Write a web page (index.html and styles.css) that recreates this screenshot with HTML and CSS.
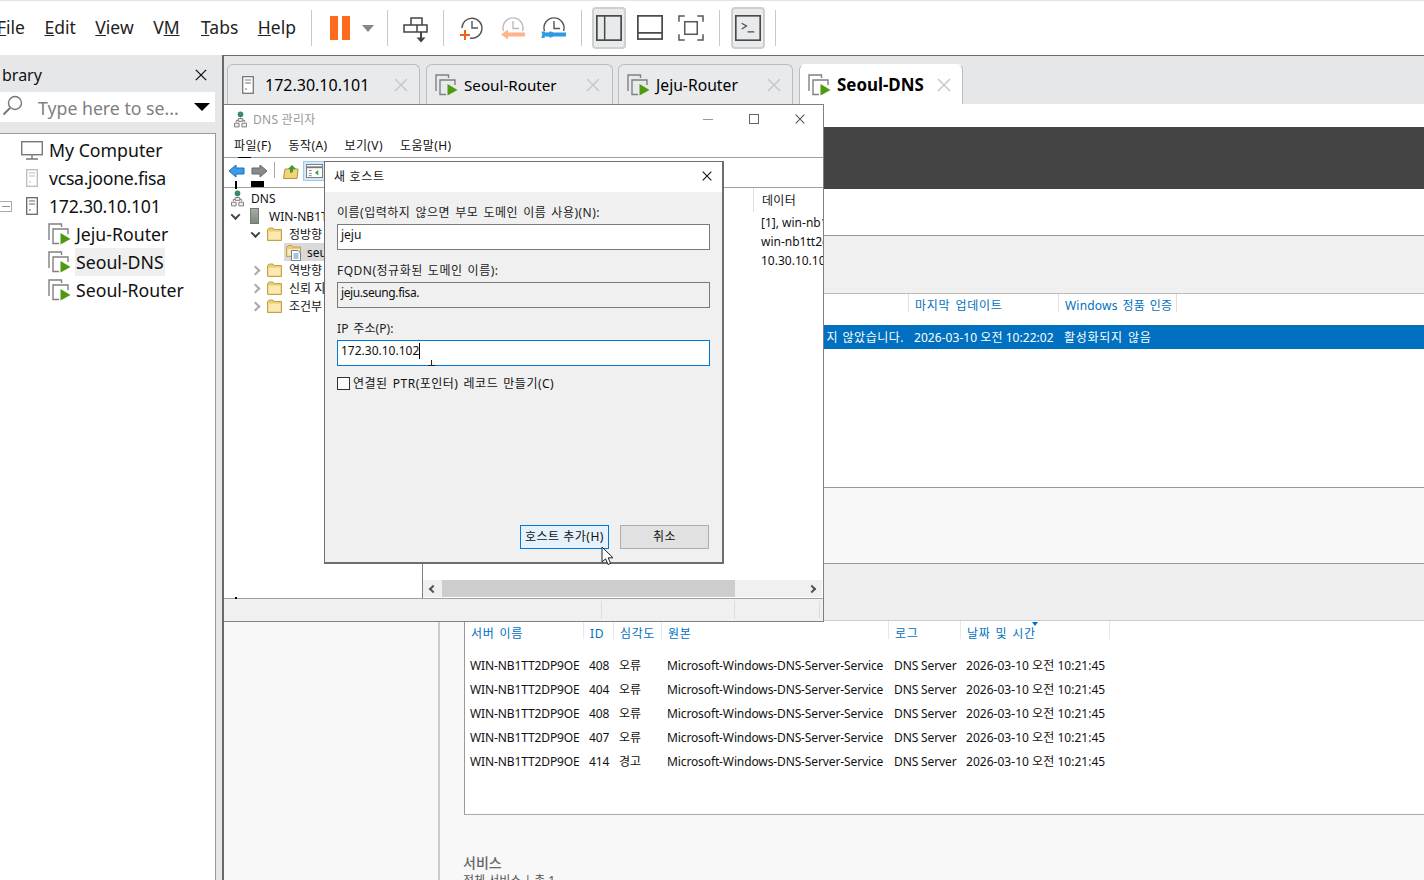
FILE: index.html
```html
<!DOCTYPE html>
<html lang="ko">
<head>
    <meta charset="UTF-8">
    <title>Seoul-DNS - VMware Workstation</title>
    <link rel="stylesheet" href="styles.css">
</head>
<body>
    <svg class="sprite" width="0" height="0">
        <symbol id="i-vm" viewBox="0 0 23 22">
            <path d="M1 17V1H13.5V4" fill="none" stroke="#808080" stroke-width="1.4"/>
            <path d="M11 20.5H5V6H20V11" fill="none" stroke="#808080" stroke-width="1.4"/>
            <path d="M12.5 10L22.5 16L12.5 21.5Z" fill="#4f9a0e"/>
        </symbol>
        <symbol id="i-server" viewBox="0 0 12 18">
            <rect x=".7" y=".7" width="10.6" height="16.6" fill="#fff" stroke="currentColor" stroke-width="1.3"/>
            <path d="M3 4H9M3 7H9M3 13H5" stroke="currentColor" stroke-width="1.2"/>
        </symbol>
        <symbol id="i-close" viewBox="0 0 14 14">
            <path d="M1 1L13 13M13 1L1 13" fill="none" stroke="currentColor" stroke-width="1.5"/>
        </symbol>
        <symbol id="i-folder" viewBox="0 0 15 14">
            <path d="M.5 13.5V2.5L2 1H6L7 2.5H14.5V13.5Z" fill="#eccb74" stroke="#c4a24e"/>
            <path d="M1.5 12.5V4.5H13.5V12.5Z" fill="#fbe9b0"/>
        </symbol>
        <symbol id="i-zone" viewBox="0 0 17 17">
            <path d="M.5 12.5V3L2 1.5H6L7 3H14.5V12.5Z" fill="#eccb74" stroke="#c4a24e"/>
            <path d="M1.5 11.5V5H13.5V11.5Z" fill="#fbe9b0"/>
            <path d="M5.5 6.5H12L14.5 9V16.5H5.5Z" fill="#fff" stroke="#6f7f95"/>
            <path d="M7.5 10H12.5M7.5 12H12.5M7.5 14H12.5" stroke="#4a86c5"/>
        </symbol>
        <symbol id="i-net" viewBox="0 0 14 18">
            <circle cx="7" cy="3.5" r="3" fill="#2f8f3e"/>
            <circle cx="7" cy="3" r="1.6" fill="#3a7fd0"/>
            <path d="M7 7V10M2.5 12V10H11.5V12" fill="none" stroke="#777"/>
            <path d="M4.5 8H9.5V11H4.5ZM.5 13H5.5V17H.5ZM8.5 13H13.5V17H8.5Z" fill="#eee" stroke="#777"/>
        </symbol>
    </svg>

    <header class="toolbar">
        <nav class="menu">
            <a class="menu-first"><u>F</u>ile</a>
            <a><u>E</u>dit</a>
            <a><u>V</u>iew</a>
            <a class="menu-vm">V<u>M</u></a>
            <a><u>T</u>abs</a>
            <a><u>H</u>elp</a>
        </nav>
        <span class="sep sep-a"></span>
        <span class="pause"><i></i><i></i></span>
        <span class="caret"></span>
        <span class="sep sep-b"></span>
        <svg class="tool tool-send" viewBox="0 0 25 26" fill="none" stroke="#444" stroke-width="1.5">
            <path d="M8 8V1H19V8M1 8H24V15H1ZM14 8V15"/>
            <path d="M18 15V22" stroke-width="2"/>
            <path d="M13.5 20.5H22.5L18 25.5Z" fill="#444" stroke="none"/>
        </svg>
        <span class="sep sep-c"></span>
        <svg class="tool tool-clock" viewBox="0 0 25 26" fill="none" stroke="#555" stroke-width="1.4">
            <path d="M3 12A10 10 0 1 1 11 22M13 5V12H19"/>
            <path d="M6 14V24M1 19H11" stroke="#f0601c" stroke-width="2"/>
        </svg>
        <svg class="tool tool-clock2" viewBox="0 0 25 26" fill="none" stroke="#bbb" stroke-width="1.4">
            <path d="M3.5 15A10 10 0 1 1 22.5 15M13 5V12.5H19"/>
            <path d="M25 18.5H6" stroke="#ffb38a" stroke-width="4"/>
            <path d="M1 18.5L8 13.5V23.5Z" fill="#ffb38a" stroke="none"/>
        </svg>
        <svg class="tool tool-clock3" viewBox="0 0 25 26" fill="none" stroke="#555" stroke-width="1.4">
            <path d="M3.5 15A10 10 0 1 1 22.5 15M13 5V12.5H19"/>
            <path d="M8 18.5H25" stroke="#2d9be0" stroke-width="4"/>
            <path d="M2 15.5A4 4 0 0 0 9.5 17A1 1 0 0 1 9.5 20A4 4 0 0 0 2 22" stroke="#2d9be0" stroke-width="3"/>
        </svg>
        <span class="sep sep-d"></span>
        <span class="toggle on">
            <svg viewBox="0 0 24 24" fill="none" stroke="#4a4a4a" stroke-width="1.6"><rect x=".8" y=".8" width="22.4" height="22.4"/><path d="M8 1V23" stroke-width="1.4"/></svg>
        </span>
        <span class="toggle">
            <svg viewBox="0 0 24 24" fill="none" stroke="#4a4a4a" stroke-width="1.6"><rect x=".8" y=".8" width="22.4" height="21.4"/><path d="M1 16.5H23"/></svg>
        </span>
        <span class="toggle">
            <svg viewBox="0 0 27 27" fill="none" stroke="#5a5a5a" stroke-width="1.6"><path d="M1 7V1H7M20 1H26V7M26 20V26H20M7 26H1V20"/><rect x="7" y="7" width="13" height="13"/></svg>
        </span>
        <span class="sep sep-e"></span>
        <span class="toggle on toggle-term">
            <svg viewBox="0 0 27 27" fill="none" stroke="#4a4a4a" stroke-width="1.6"><rect x=".8" y=".8" width="25.4" height="25.4" stroke-width="1.8"/><path d="M7 8.5L12 11.5L7 14.5M13 17.5H20" stroke-width="1.2"/></svg>
        </span>
        <span class="sep sep-f"></span>
    </header>

    <div class="main">
        <aside class="library">
            <div class="library-head">
                <span class="library-title">brary</span>
                <svg class="library-close"><use href="#i-close"/></svg>
            </div>
            <div class="library-search">
                <svg class="search-icon" viewBox="0 0 22 22" fill="none" stroke="#777" stroke-width="1.4"><circle cx="13" cy="8" r="6.5"/><path d="M8 13L1.5 19.5" stroke-width="2"/></svg>
                <span class="search-text">Type here to se...</span>
                <span class="search-caret"></span>
            </div>
            <ul class="lib-tree">
                <li class="lib-row">
                    <svg class="lib-pc" viewBox="0 0 22 19" fill="none" stroke="#777" stroke-width="1.4"><rect x=".7" y=".7" width="20.6" height="13"/><path d="M11 14V17.5M5 18H17"/></svg>
                    <span class="lib-label">My Computer</span>
                </li>
                <li class="lib-row">
                    <svg class="lib-srv dim"><use href="#i-server"/></svg>
                    <span class="lib-label lib-tight">vcsa.joone.fisa</span>
                </li>
                <li class="lib-row">
                    <span class="lib-minus"></span>
                    <svg class="lib-srv"><use href="#i-server"/></svg>
                    <span class="lib-label lib-tight">172.30.10.101</span>
                </li>
                <li class="lib-row lib-child">
                    <svg class="lib-vm"><use href="#i-vm"/></svg>
                    <span class="lib-label">Jeju-Router</span>
                </li>
                <li class="lib-row lib-child">
                    <svg class="lib-vm"><use href="#i-vm"/></svg>
                    <span class="lib-label lib-active">Seoul-DNS</span>
                </li>
                <li class="lib-row lib-child">
                    <svg class="lib-vm"><use href="#i-vm"/></svg>
                    <span class="lib-label">Seoul-Router</span>
                </li>
            </ul>
        </aside>

        <section class="workspace">
            <div class="tabs">
                <div class="tab tab-host">
                    <svg class="tab-srv"><use href="#i-server"/></svg>
                    <span class="tab-label">172.30.10.101</span>
                    <svg class="tab-x"><use href="#i-close"/></svg>
                </div>
                <div class="tab tab-r1">
                    <svg class="tab-vm"><use href="#i-vm"/></svg>
                    <span class="tab-label">Seoul-Router</span>
                    <svg class="tab-x"><use href="#i-close"/></svg>
                </div>
                <div class="tab tab-r2">
                    <svg class="tab-vm"><use href="#i-vm"/></svg>
                    <span class="tab-label">Jeju-Router</span>
                    <svg class="tab-x"><use href="#i-close"/></svg>
                </div>
                <div class="tab tab-on">
                    <svg class="tab-vm"><use href="#i-vm"/></svg>
                    <span class="tab-label">Seoul-DNS</span>
                    <svg class="tab-x"><use href="#i-close"/></svg>
                </div>
            </div>

            <div class="guest">
                <div class="sm-top"></div>
                <div class="sm-banner"></div>
                <div class="sm-strip"></div>
                <div class="sm-tasks"></div>
                <div class="sm-head">
                    <span class="sm-col sm-col-a">마지막 업데이트</span>
                    <span class="sm-col sm-col-b">Windows 정품 인증</span>
                </div>
                <div class="sm-row">
                    <span class="sm-cell sm-cell-a">지 않았습니다.</span>
                    <span class="sm-cell sm-cell-b">2026-03-10 오전 10:22:02</span>
                    <span class="sm-cell">활성화되지 않음</span>
                </div>
                <div class="sm-blank"></div>
                <div class="sm-band"></div>
                <div class="sm-band2"></div>
                <div class="sm-lower">
                    <div class="sm-nav"></div>
                    <div class="sm-content">
                        <div class="events">
                            <div class="ev-grid ev-head">
                                <span>서버 이름</span><span>ID</span><span>심각도</span><span>원본</span><span>로그</span><span class="ev-sorted">날짜 및 시간</span>
                            </div>
                            <div class="ev-grid ev-row"><span>WIN-NB1TT2DP9OE</span><span>408</span><span>오류</span><span>Microsoft-Windows-DNS-Server-Service</span><span>DNS Server</span><span>2026-03-10 오전 10:21:45</span></div>
                            <div class="ev-grid ev-row"><span>WIN-NB1TT2DP9OE</span><span>404</span><span>오류</span><span>Microsoft-Windows-DNS-Server-Service</span><span>DNS Server</span><span>2026-03-10 오전 10:21:45</span></div>
                            <div class="ev-grid ev-row"><span>WIN-NB1TT2DP9OE</span><span>408</span><span>오류</span><span>Microsoft-Windows-DNS-Server-Service</span><span>DNS Server</span><span>2026-03-10 오전 10:21:45</span></div>
                            <div class="ev-grid ev-row"><span>WIN-NB1TT2DP9OE</span><span>407</span><span>오류</span><span>Microsoft-Windows-DNS-Server-Service</span><span>DNS Server</span><span>2026-03-10 오전 10:21:45</span></div>
                            <div class="ev-grid ev-row"><span>WIN-NB1TT2DP9OE</span><span>414</span><span>경고</span><span>Microsoft-Windows-DNS-Server-Service</span><span>DNS Server</span><span>2026-03-10 오전 10:21:45</span></div>
                        </div>
                        <h2 class="svc-title">서비스</h2>
                        <p class="svc-sub">전체 서비스 | 총 1</p>
                    </div>
                </div>
            </div>
        </section>
    </div>

    <!-- DNS 관리자 창 -->
    <div class="dns-win">
        <div class="dns-title">
            <svg class="dns-icon"><use href="#i-net"/></svg>
            <span class="dns-name">DNS 관리자</span>
            <span class="win-btns">
                <span class="win-min"></span>
                <span class="win-max"></span>
                <svg class="win-x"><use href="#i-close"/></svg>
            </span>
        </div>
        <div class="dns-menu">
            <span>파일(F)</span><span>동작(A)</span><span>보기(V)</span><span>도움말(H)</span>
        </div>
        <div class="dns-tools">
            <svg class="nav-arrow" viewBox="0 0 17 14"><path d="M1 7L8 1V4H16V10H8V13Z" fill="#3c9be8" stroke="#1b6fb5"/></svg>
            <svg class="nav-arrow" viewBox="0 0 17 14"><path d="M16 7L9 1V4H1V10H9V13Z" fill="#8a8a8a" stroke="#666"/></svg>
            <span class="tool-sep"></span>
            <svg class="tool-up" viewBox="0 0 16 15"><path d="M.5 14.5L2 5H15L14 14.5Z" fill="#f3d27a" stroke="#b2913f"/><path d="M7 9V5L5 5L9 1L13 5H10V8" fill="#3f9b2c"/></svg>
            <span class="tool-pane">
                <svg viewBox="0 0 18 15" fill="none"><rect x=".5" y=".5" width="17" height="14" fill="#fff" stroke="#777"/><path d="M1 3.5H17" stroke="#777" stroke-width="2"/><path d="M3 7H6M3 10H6M3 12.5H6" stroke="#777"/><path d="M13 6.5V12L9.5 9.25Z" fill="#3f9b2c"/></svg>
            </span>
        </div>
        <div class="dns-body">
            <div class="dns-tree">
                <div class="tree-row"><svg class="tree-net"><use href="#i-net"/></svg><span>DNS</span></div>
                <div class="tree-row tree-l1"><span class="chev down"></span><span class="tree-srv"></span><span>WIN-NB1TT2DP9OE</span></div>
                <div class="tree-row tree-l2"><span class="chev down"></span><svg class="tree-folder"><use href="#i-folder"/></svg><span>정방향 조회 영역</span></div>
                <div class="tree-row tree-l3"><span class="tree-sel"><svg class="tree-zone"><use href="#i-zone"/></svg><span>seung.fisa</span></span></div>
                <div class="tree-row tree-l2"><span class="chev"></span><svg class="tree-folder"><use href="#i-folder"/></svg><span>역방향 조회 영역</span></div>
                <div class="tree-row tree-l2"><span class="chev"></span><svg class="tree-folder"><use href="#i-folder"/></svg><span>신뢰 지점</span></div>
                <div class="tree-row tree-l2"><span class="chev"></span><svg class="tree-folder"><use href="#i-folder"/></svg><span>조건부 전달자</span></div>
            </div>
            <div class="dns-list">
                <div class="list-rows">
                    <div class="list-head">데이터</div>
                    <div class="list-cell">[1], win-nb1tt2dp9oe.</div>
                    <div class="list-cell">win-nb1tt2dp9oe.</div>
                    <div class="list-cell">10.30.10.102</div>
                </div>
                <div class="hscroll">
                    <span class="hs-arrow hs-left"></span>
                    <span class="hs-thumb"></span>
                    <span class="hs-arrow hs-right"></span>
                </div>
            </div>
        </div>
        <div class="dns-status"><span></span><span></span><span></span></div>

        <!-- 화면 잔상 -->
        <i class="smear smear-a"></i><i class="smear smear-b"></i><i class="smear smear-c"></i><i class="smear smear-d"></i>

        <!-- 새 호스트 대화 상자 -->
        <div class="dialog">
            <div class="dlg-title">
                <span>새 호스트</span>
                <svg class="dlg-x"><use href="#i-close"/></svg>
            </div>
            <div class="dlg-body">
                <label class="dlg-label">이름(입력하지 않으면 부모 도메인 이름 사용)(N):</label>
                <div class="dlg-input">jeju</div>
                <label class="dlg-label">FQDN(정규화된 도메인 이름):</label>
                <div class="dlg-input readonly">jeju.seung.fisa.</div>
                <label class="dlg-label dlg-label-ip">IP 주소(P):</label>
                <div class="dlg-input focus">172.30.10.102<i class="caret-bar"></i><i class="ibeam"></i></div>
                <div class="dlg-check"><span class="check-box"></span><span>연결된 PTR(포인터) 레코드 만들기(C)</span></div>
                <div class="dlg-actions">
                    <span class="dlg-btn primary">호스트 추가(H)</span>
                    <span class="dlg-btn">취소</span>
                </div>
            </div>
        </div>
    </div>

    <svg class="pointer" viewBox="0 0 13 20"><path d="M1 1V16L4.6 12.8L7 18.5L9.6 17.4L7.2 11.8H12Z" fill="#fff" stroke="#222" stroke-width="1"/></svg>
</body>
</html>
```

FILE: styles.css
```css
* {
    box-sizing: border-box;
}
html, body {
    height: 100%;
}
body {
    margin: 0;
    width: 1424px;
    height: 880px;
    overflow: hidden;
    position: relative;
    background: #fff;
    color: #111;
    font-family: "Noto Sans", "Noto Sans CJK KR", sans-serif;
}
ul {
    list-style: none;
    margin: 0;
    padding: 0;
}
.sprite {
    position: absolute;
}

/* toolbar */
.toolbar {
    height: 55px;
    display: flex;
    align-items: center;
    background: #fff;
    border-top: 1px solid #e4e4e4;
}
.menu {
    display: flex;
    gap: 19.5px;
    margin-left: -3px;
    margin-bottom: 2px;
    width: 300px;
    font-size: 17.5px;
}
.menu a {
    color: #222;
}
.menu .menu-vm {
    margin-right: 2px;
}
.sep {
    width: 1px;
    height: 36px;
    background: #c8c8c8;
    flex: none;
}
.sep-a { margin-left: 14px; }
.pause {
    display: flex;
    gap: 4px;
    margin-left: 18px;
}
.pause i {
    width: 8px;
    height: 24px;
    background: #ff6a1f;
}
.caret {
    width: 0;
    height: 0;
    margin-left: 12px;
    border: 6px solid transparent;
    border-top: 7px solid #888;
    border-bottom: 0;
}
.sep-b { margin-left: 13px; }
.tool {
    width: 25px;
    height: 26px;
    flex: none;
}
.tool-send { margin-left: 15px; margin-top: 4px; }
.sep-c { margin-left: 15px; }
.tool-clock { margin-left: 15px; margin-top: 2px; }
.tool-clock2 { margin-left: 16px; margin-top: 1px; }
.tool-clock3 { margin-left: 16px; margin-top: 1px; }
.sep-d { margin-left: 15px; }
.toggle {
    width: 34px;
    height: 42px;
    display: flex;
    align-items: center;
    justify-content: center;
    border: 2px solid transparent;
    border-radius: 4px;
    flex: none;
    margin-left: 10px;
}
.toggle svg {
    width: 26px;
    height: 26px;
}
.toggle.on {
    background: #e9eaec;
    border-color: #cfcfcf;
}
.toggle + .toggle {
    margin-left: 7px;
}
.sep-e { margin-left: 11px; }
.toggle-term {
    margin-left: 11px;
}
.sep-f { margin-left: 10px; }

/* library */
.main {
    height: 825px;
    display: flex;
}
.library {
    width: 222px;
    flex: none;
    display: flex;
    flex-direction: column;
    background: #e6e7e9;
}
.library-head {
    height: 37px;
    display: flex;
    align-items: center;
    justify-content: space-between;
    padding: 2px 15px 0 2px;
    font-size: 16px;
}
.library-close {
    width: 12px;
    height: 12px;
    color: #111;
}
.library-search {
    width: 215px;
    height: 30px;
    display: flex;
    align-items: center;
    background: #fff;
    padding: 0 5px 0 2px;
}
.search-icon {
    width: 22px;
    height: 22px;
    margin-bottom: 2px;
}
.search-text {
    margin-left: 14px;
    margin-top: 2px;
    font-size: 17.7px;
    color: #808080;
}
.search-caret {
    margin-left: auto;
    width: 0;
    height: 0;
    border: 8px solid transparent;
    border-top: 8px solid #000;
    border-bottom: 0;
    margin-right: 0;
}
.lib-tree {
    width: 216px;
    flex: 1;
    margin-top: 11px;
    padding-top: 2px;
    background: #fff;
    border-top: 1px solid #9a9a9a;
    border-right: 1px solid #9a9a9a;
    font-size: 17.7px;
}
.lib-row {
    height: 28px;
    display: flex;
    align-items: center;
    padding-left: 21px;
    position: relative;
}
.lib-pc {
    width: 22px;
    height: 19px;
    margin-right: 5px;
}
.lib-srv {
    width: 12px;
    height: 18px;
    margin: 0 10px 0 5px;
    color: #666;
}
.lib-srv.dim {
    color: #bbb;
}
.lib-minus {
    position: absolute;
    left: 0;
    top: 9px;
    width: 12px;
    height: 11px;
    border: 1px solid #aaa;
    border-left: 0;
    background: linear-gradient(#8a8fa0, #8a8fa0) center / 8px 1px no-repeat;
}
.lib-child {
    padding-left: 48px;
}
.lib-vm {
    width: 23px;
    height: 22px;
    margin-right: 4px;
    flex: none;
}
.lib-label {
    white-space: nowrap;
    padding: 0 1px;
}
.lib-tight {
    letter-spacing: -.3px;
}
.lib-active {
    background: #efefef;
    line-height: 28px;
}

/* tabs + guest */
.workspace {
    flex: 1;
    min-width: 0;
    display: flex;
    flex-direction: column;
    border-left: 2px solid #6a6a6a;
    border-top: 1px solid #6a6a6a;
}
.tabs {
    height: 48px;
    flex: none;
    display: flex;
    align-items: flex-end;
    padding-left: 3px;
    background: #e6e7e9;
    font-size: 16px;
    color: #000;
}
.tab {
    height: 40px;
    display: flex;
    align-items: center;
    padding: 0 11px 0 8px;
    margin-right: 6px;
    background: #e9eaec;
    border: 1px solid #bcbcbc;
    border-bottom: 0;
    border-radius: 6px 6px 0 0;
    white-space: nowrap;
}
.tab-host { width: 193px; padding-left: 14px; }
.tab-r1 { width: 187px; margin-right: 5px; font-size: 15.2px; padding-right: 12px; }
.tab-r2 { width: 175px; font-size: 15.7px; padding-right: 11px; }
.tab-on {
    width: 164px;
    background: #fff;
    font-weight: 700;
    font-size: 16.9px;
    border-color: #fff #bcbcbc;
}
.tab-srv {
    width: 12px;
    height: 18px;
    margin-right: 11px;
    color: #777;
}
.tab-vm {
    width: 23px;
    height: 22px;
    margin-right: 6px;
    flex: none;
}
.tab-x {
    width: 14px;
    height: 14px;
    margin-left: auto;
    color: #c9c9c9;
    flex: none;
}
.guest {
    flex: 1;
    min-height: 0;
    display: flex;
    flex-direction: column;
    background: #fff;
    font-size: 12px;
}
.sm-top { height: 23px; flex: none; }
.sm-banner { height: 62px; flex: none; background: #444; }
.sm-strip { height: 46px; flex: none; }
.sm-tasks {
    height: 59px;
    flex: none;
    background: #f0f0f0;
    border-top: 1px solid #999;
    border-bottom: 1px solid #bbb;
}
.sm-head {
    height: 31px;
    flex: none;
    display: flex;
    align-items: flex-start;
    padding-left: 684px;
    color: #0070c0;
    letter-spacing: .7px;
    word-spacing: 1.5px;
}
.sm-col {
    height: 18px;
    padding-left: 6px;
    border-left: 1px solid #e0e0e0;
    line-height: 24px;
    white-space: nowrap;
}
.sm-col-a { width: 150px; }
.sm-col-b { width: 119px; border-right: 1px solid #e0e0e0; letter-spacing: .2px; }
.sm-row {
    height: 24px;
    flex: none;
    display: flex;
    align-items: center;
    background: #0070c0;
    color: #fff;
    white-space: nowrap;
}
.sm-cell-a {
    width: 680px;
    text-align: right;
    letter-spacing: .5px;
    word-spacing: 1px;
}
.sm-cell-b {
    width: 160px;
    padding-left: 10px;
    letter-spacing: .05px;
}
.sm-cell:last-child {
    letter-spacing: .7px;
    word-spacing: 1.5px;
}
.sm-blank { height: 138px; flex: none; }
.sm-band {
    height: 76px;
    flex: none;
    background: #f8f8f8;
    border-top: 1px solid #999;
}
.sm-band2 {
    height: 58px;
    flex: none;
    background: #efefef;
    border-top: 1px solid #999;
    border-bottom: 1px solid #ccc;
}
.sm-lower {
    flex: 1;
    min-height: 0;
    display: flex;
    background: #f8f8f8;
}
.sm-nav {
    width: 216px;
    flex: none;
    border-right: 2px solid #ccc;
}
.sm-content {
    flex: 1;
    min-width: 0;
    padding-left: 24px;
}
.events {
    height: 194px;
    background: #fff;
    border-left: 1px solid #999;
    border-bottom: 1px solid #aaa;
}
.ev-grid {
    display: grid;
    grid-template-columns: 119px 30px 48px 227px 72px 149px;
    white-space: nowrap;
}
.ev-head {
    height: 32px;
    color: #0070c0;
    letter-spacing: .6px;
    word-spacing: 1.5px;
}
.ev-head span {
    height: 18px;
    padding-left: 6px;
    line-height: 26px;
    border-right: 1px solid #e8e8e8;
}
.ev-sorted {
    position: relative;
}
.ev-sorted::after {
    content: "";
    position: absolute;
    left: 71px;
    top: 1px;
    border: 3px solid transparent;
    border-top: 4px solid #0070c0;
    border-bottom: 0;
}
.ev-row {
    height: 24px;
    align-items: center;
}
.ev-row span {
    padding-left: 5px;
    letter-spacing: -.12px;
}
.ev-row span:nth-child(3),
.ev-row span:last-child {
    letter-spacing: .03px;
}
.svc-title {
    margin: 38px 0 0 -1px;
    font-size: 14px;
    font-weight: 500;
    color: #666;
    line-height: 20px;
}
.svc-sub {
    margin: -2px 0 0 -1px;
    font-size: 12px;
    color: #555;
}

/* DNS manager window */
.dns-win {
    position: absolute;
    left: 224px;
    top: 104px;
    width: 600px;
    height: 518px;
    display: flex;
    flex-direction: column;
    background: #fff;
    border: 1px solid #808080;
    border-width: 1px 1px 1px 0;
    font-size: 12px;
}
.dns-title {
    height: 26px;
    flex: none;
    display: flex;
    align-items: center;
    padding: 2px 18px 0 10px;
    color: #999;
}
.dns-icon {
    width: 13px;
    height: 17px;
    margin-right: 6px;
}
.dns-name {
    letter-spacing: .25px;
}
.win-btns {
    margin-left: auto;
    display: flex;
    align-items: center;
    gap: 36px;
}
.win-min {
    width: 10px;
    height: 1px;
    background: #999;
}
.win-max {
    width: 10px;
    height: 10px;
    border: 1px solid #666;
}
.win-x {
    width: 10px;
    height: 10px;
    color: #555;
}
.dns-menu {
    height: 27px;
    flex: none;
    display: flex;
    align-items: center;
    gap: 17px;
    padding: 2px 0 0 10px;
    letter-spacing: .4px;
    border-bottom: 1px solid #a0a0a0;
}
.dns-tools {
    height: 30px;
    flex: none;
    display: flex;
    align-items: flex-start;
    padding: 3px 0 0 4px;
    background: #fff;
    border-bottom: 1px solid #a0a0a0;
}
.nav-arrow {
    width: 17px;
    height: 14px;
    margin: 3px 6px 0 0;
}
.tool-sep {
    width: 1px;
    height: 16px;
    background: #aaa;
    margin: 1px 8px 0 0;
}
.tool-up {
    width: 16px;
    height: 15px;
    margin: 3px 4px 0 0;
}
.tool-pane {
    width: 23px;
    height: 20px;
    padding: 2px;
    background: #d5e8f8;
    border: 1px solid #9ecbef;
    display: flex;
}
.tool-pane svg {
    width: 100%;
    height: 100%;
}
.dns-body {
    flex: 1;
    min-height: 0;
    display: flex;
}
.dns-tree {
    width: 199px;
    flex: none;
    overflow: hidden;
    padding-top: 1px;
    border-right: 1px solid #808080;
}
.tree-row {
    height: 18px;
    display: flex;
    align-items: center;
    gap: 7px;
    padding-left: 7px;
    white-space: nowrap;
}
.tree-net {
    width: 13px;
    height: 17px;
}
.tree-l1 { padding-left: 8px; gap: 6px; }
.tree-l2 { padding-left: 28px; gap: 8px; }
.tree-l2 .tree-folder { margin-right: -1px; }
.tree-l3 { padding-left: 60px; }
.tree-srv {
    width: 9px;
    height: 16px;
    margin: 0 4px 0 5px;
    background: linear-gradient(#a8a8a8, #7d8d7d);
    border: 1px solid #777;
}
.tree-folder {
    width: 15px;
    height: 14px;
    flex: none;
}
.tree-zone {
    width: 17px;
    height: 17px;
    flex: none;
}
.tree-sel {
    display: flex;
    align-items: center;
    gap: 4px;
    height: 18px;
    padding: 0 2px;
    background: #d9d9d9;
}
.chev {
    width: 7px;
    height: 7px;
    flex: none;
    border-right: 2px solid #aaa;
    border-bottom: 2px solid #aaa;
    transform: rotate(-45deg);
}
.chev.down {
    border-color: #444;
    transform: rotate(45deg) translate(-1px, -1px);
}
.dns-list {
    flex: 1;
    min-width: 0;
    display: flex;
    flex-direction: column;
}
.list-rows {
    flex: 1;
    overflow: hidden;
    padding-left: 330px;
}
.list-head {
    height: 25px;
    padding-left: 8px;
    margin-bottom: 1px;
    margin-top: -1px;
    line-height: 28px;
    letter-spacing: .3px;
    border-left: 1px solid #e0e0e0;
    white-space: nowrap;
}
.list-cell {
    height: 19px;
    line-height: 19px;
    padding-left: 8px;
    white-space: nowrap;
}
.hscroll {
    height: 17px;
    flex: none;
    display: flex;
    align-items: center;
    margin-bottom: 1px;
    margin-right: 1px;
    background: #f0f0f0;
}
.hs-arrow {
    width: 6px;
    height: 6px;
    flex: none;
    border-left: 2px solid #555;
    border-bottom: 2px solid #555;
}
.hs-left {
    margin: 0 6px 0 7px;
    transform: rotate(45deg);
}
.hs-right {
    margin: 0 7px 0 auto;
    transform: rotate(225deg);
}
.hs-thumb {
    width: 293px;
    height: 100%;
    background: #cdcdcd;
}
.dns-status {
    height: 23px;
    flex: none;
    display: flex;
    background: #f0f0f0;
    border-top: 1px solid #a0a0a0;
}
.dns-status span {
    width: 378px;
    border-right: 1px solid #dcdcdc;
    margin: 2px 0;
}
.dns-status span:nth-child(2) {
    width: 133px;
}
.dns-status span:nth-child(3) {
    width: 85px;
}
.smear {
    position: absolute;
    background: #000;
}
.smear-a { left: 14px; top: 52px; width: 13px; height: 1px; }
.smear-b { left: 11px; top: 76px; width: 2px; height: 8px; }
.smear-c { left: 27px; top: 76px; width: 13px; height: 6px; }
.smear-d { left: 11px; top: 492px; width: 2px; height: 2px; }

/* new host dialog */
.dialog {
    position: absolute;
    left: 100px;
    top: 56px;
    width: 400px;
    height: 403px;
    display: flex;
    flex-direction: column;
    background: #f0f0f0;
    border: 1px solid #6e6e6e;
    border-width: 1px 2px 2px 1px;
    z-index: 2;
}
.dlg-title {
    height: 30px;
    flex: none;
    display: flex;
    align-items: center;
    justify-content: space-between;
    padding: 0 10px 2px 9px;
    background: #fff;
    letter-spacing: .7px;
}
.dlg-x {
    width: 10px;
    height: 10px;
    color: #111;
}
.dlg-body {
    flex: 1;
    min-height: 0;
    display: flex;
    flex-direction: column;
    padding: 11px 12px 13px;
}
.dlg-label {
    height: 21px;
    line-height: 19px;
    white-space: nowrap;
    color: #222;
    letter-spacing: .5px;
    word-spacing: 1.5px;
}
.dlg-label-ip {
    letter-spacing: .1px;
}
.dlg-input {
    height: 26px;
    margin-bottom: 11px;
    padding-left: 3px;
    background: #fff;
    border: 1px solid #7a7a7a;
    line-height: 20px;
    position: relative;
}
.dlg-input.readonly {
    background: #f0f0f0;
    letter-spacing: -.4px;
}
.dlg-input.focus {
    border-color: #0078d7;
}
.caret-bar {
    display: inline-block;
    width: 1px;
    height: 16px;
    background: #000;
    vertical-align: -4px;
}
.ibeam {
    position: absolute;
    left: 90px;
    bottom: -1px;
    width: 7px;
    height: 6px;
    background: linear-gradient(#222, #222) center / 1px 100% no-repeat, linear-gradient(#222, #222) center bottom / 100% 1px no-repeat;
}
.dlg-check {
    display: flex;
    align-items: center;
    gap: 3px;
    height: 14px;
    margin-top: -1px;
    letter-spacing: .5px;
    word-spacing: 1.5px;
}
.check-box {
    width: 13px;
    height: 13px;
    background: #fff;
    border: 1px solid #333;
}
.dlg-actions {
    margin-top: auto;
    margin-right: 1px;
    display: flex;
    justify-content: flex-end;
    gap: 11px;
    letter-spacing: .5px;
}
.dlg-btn {
    width: 89px;
    height: 24px;
    line-height: 21px;
    text-align: center;
    background: #e1e1e1;
    border: 1px solid #adadad;
}
.dlg-btn.primary {
    background: #e5f1fb;
    border-color: #0078d7;
}
.pointer {
    position: absolute;
    left: 601px;
    top: 546px;
    width: 13px;
    height: 20px;
    z-index: 3;
}
```
